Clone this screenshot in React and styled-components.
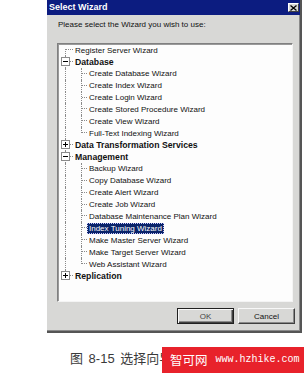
import React from 'react';
import styled, { createGlobalStyle } from 'styled-components';

const Global = createGlobalStyle`
  html, body { margin: 0; padding: 0; background: #ffffff; }
  body { width: 304px; height: 373px; overflow: hidden; font-family: "Liberation Sans", Arial, sans-serif; }
`;

const Page = styled.div`
  display: flex;
  flex-direction: column;
  width: 304px;
`;

const Dialog = styled.div`
  margin-left: 47px;
  width: 255px;
  box-sizing: border-box;
  background: #d8d8d6;
  border-right: 2px solid #555;
  border-bottom: 2px solid #555;
  box-shadow: inset -1px -1px 0 #8a8a8a;
  display: flex;
  flex-direction: column;
`;

const TitleBar = styled.div`
  height: 15px;
  background: #0c1c80;
  display: flex;
  align-items: center;
  justify-content: space-between;
  padding-left: 2px;
`;

const Title = styled.span`
  color: #fff;
  font-weight: bold;
  font-size: 9px;
  line-height: 15px;
`;

const CloseBtn = styled.div`
  width: 11px;
  height: 9px;
  margin-right: 1px;
  box-sizing: border-box;
  background: #d8d8d6;
  border: 1px solid;
  border-color: #fff #404040 #404040 #fff;
  display: flex;
  align-items: center;
  justify-content: center;
`;

const Body = styled.div`
  display: flex;
  flex-direction: column;
  padding: 5px 5px 7px 10px;
`;

const Prompt = styled.div`
  font-size: 8px;
  line-height: 10px;
  color: #111;
  padding-left: 1px;
`;

const ListBox = styled.div`
  margin-top: 13px;
  margin-right: 2px;
  height: 259px;
  box-sizing: border-box;
  background: #fdfdfd;
  border: 1px solid;
  border-color: #808080 #f4f4f4 #f4f4f4 #808080;
  box-shadow: inset 1px 1px 0 #9a9a9a;
  display: flex;
  flex-direction: column;
  overflow: hidden;
`;

const Row = styled.div`
  display: flex;
  align-items: stretch;
  height: 11.9px;
  flex: none;
`;

const LineCell = styled.div`
  position: relative;
  flex: none;
  width: ${p => p.$w}px;
  &::before {
    content: '';
    display: ${p => (p.$vert ? 'block' : 'none')};
    position: absolute;
    left: ${p => p.$x}px;
    top: ${p => (p.$vert === 'down' ? '5px' : '0')};
    bottom: ${p => (p.$vert === 'up' ? 'auto' : '0')};
    height: ${p => (p.$vert === 'up' ? '6px' : 'auto')};
    border-left: 1px dotted #8a8a8a;
  }
  &::after {
    content: '';
    display: ${p => (p.$branch ? 'block' : 'none')};
    position: absolute;
    left: ${p => p.$x + 1}px;
    right: 0;
    top: 5px;
    border-top: 1px dotted #8a8a8a;
  }
`;

const Expander = styled.div`
  position: absolute;
  left: 3px;
  top: 1px;
  width: 9px;
  height: 9px;
  box-sizing: border-box;
  border: 1px solid #8a8a8a;
  background: #fff;
  z-index: 1;
  &::before {
    content: '';
    position: absolute;
    left: 1px;
    top: 3px;
    width: 5px;
    height: 1px;
    background: #000;
  }
  &::after {
    content: '';
    display: ${p => (p.$open ? 'none' : 'block')};
    position: absolute;
    left: 3px;
    top: 1px;
    width: 1px;
    height: 5px;
    background: #000;
  }
`;

const Label = styled.span`
  display: flex;
  align-items: center;
  height: 11px;
  margin-top: 0.5px;
  padding: 0 2px;
  box-sizing: border-box;
  white-space: nowrap;
  font-size: ${p => (p.$bold ? '8.7px' : '8px')};
  font-weight: ${p => (p.$bold ? 'bold' : 'normal')};
  color: ${p => (p.$sel ? '#fff' : '#111')};
  background: ${p => (p.$sel ? '#0a246a' : 'transparent')};
  outline: ${p => (p.$sel ? '1px dotted #c8c8ff' : 'none')};
  outline-offset: -1px;
`;

const ButtonRow = styled.div`
  display: flex;
  justify-content: flex-end;
  gap: 4px;
  margin-top: 6px;
`;

const Button = styled.div`
  width: 57px;
  height: 16px;
  box-sizing: border-box;
  display: flex;
  align-items: center;
  justify-content: center;
  font-size: 8px;
  color: ${p => (p.$default ? '#444' : '#111')};
  background: #d8d8d6;
  border: 1px solid;
  border-color: ${p => (p.$default ? '#202020' : '#f8f8f8 #404040 #404040 #f8f8f8')};
  box-shadow: ${p =>
    p.$default
      ? 'inset 1px 1px 0 #f8f8f8, inset -1px -1px 0 #404040, inset -2px -2px 0 #8a8a8a'
      : 'inset -1px -1px 0 #8a8a8a'};
`;

const Caption = styled.div`
  position: relative;
  height: 40px;
  display: flex;
  align-items: flex-start;
  padding-top: 18px;
  padding-left: 70px;
  box-sizing: border-box;
`;

const CaptionText = styled.span`
  font-family: "Liberation Sans", "Noto Sans CJK SC", sans-serif;
  font-size: 13px;
  line-height: 15px;
  color: #3a3a3a;
  white-space: nowrap;
  word-spacing: 2px;
`;

const Watermark = styled.div`
  position: absolute;
  left: 162px;
  top: 14px;
  right: 0;
  bottom: 0;
  background: #e8222b;
  display: flex;
  align-items: center;
  padding-left: 8px;
  gap: 8px;
  color: #fff;
`;

const WmName = styled.span`
  font-family: "Noto Sans CJK SC", sans-serif;
  font-size: 12.5px;
  line-height: 14px;
`;

const WmUrl = styled.span`
  font-family: "Liberation Mono", monospace;
  font-size: 10px;
  line-height: 12px;
`;

const rows = [
  { root: true, label: 'Register Server Wizard', rootVert: 'down' },
  { root: true, label: 'Database', bold: true, exp: 'open' },
  { label: 'Create Database Wizard' },
  { label: 'Create Index Wizard' },
  { label: 'Create Login Wizard' },
  { label: 'Create Stored Procedure Wizard' },
  { label: 'Create View Wizard' },
  { label: 'Full-Text Indexing Wizard', last: true },
  { root: true, label: 'Data Transformation Services', bold: true, exp: 'closed' },
  { root: true, label: 'Management', bold: true, exp: 'open' },
  { label: 'Backup Wizard' },
  { label: 'Copy Database Wizard' },
  { label: 'Create Alert Wizard' },
  { label: 'Create Job Wizard' },
  { label: 'Database Maintenance Plan Wizard' },
  { label: 'Index Tuning Wizard', sel: true },
  { label: 'Make Master Server Wizard' },
  { label: 'Make Target Server Wizard' },
  { label: 'Web Assistant Wizard', last: true },
  { root: true, label: 'Replication', bold: true, exp: 'closed', rootVert: 'up' },
];

function TreeRow({ r }) {
  if (r.root) {
    return (
      <Row>
        <LineCell $w={15} $x={7} $vert={r.rootVert || 'full'} $branch>
          {r.exp && <Expander $open={r.exp === 'open'} />}
        </LineCell>
        <Label $bold={r.bold}>{r.label}</Label>
      </Row>
    );
  }
  return (
    <Row>
      <LineCell $w={15} $x={7} $vert="full" />
      <LineCell $w={14} $x={8} $vert={r.last ? 'up' : 'full'} $branch />
      <Label $sel={r.sel}>{r.label}</Label>
    </Row>
  );
}

export default function App() {
  return (
    <>
      <Global />
      <Page>
        <Dialog>
          <TitleBar>
            <Title>Select Wizard</Title>
            <CloseBtn>
              <svg width="7" height="6" viewBox="0 0 7 6">
                <path d="M0.5 0.5 L6.5 5.5 M6.5 0.5 L0.5 5.5" stroke="#000" strokeWidth="1.3" />
              </svg>
            </CloseBtn>
          </TitleBar>
          <Body>
            <Prompt>Please select the Wizard you wish to use:</Prompt>
            <ListBox>
              {rows.map((r, i) => (
                <TreeRow key={i} r={r} />
              ))}
            </ListBox>
            <ButtonRow>
              <Button $default>OK</Button>
              <Button>Cancel</Button>
            </ButtonRow>
          </Body>
        </Dialog>
        <Caption>
          <CaptionText>图 8-15 选择向导</CaptionText>
          <Watermark>
            <WmName>智可网</WmName>
            <WmUrl>www.hzhike.com</WmUrl>
          </Watermark>
        </Caption>
      </Page>
    </>
  );
}
